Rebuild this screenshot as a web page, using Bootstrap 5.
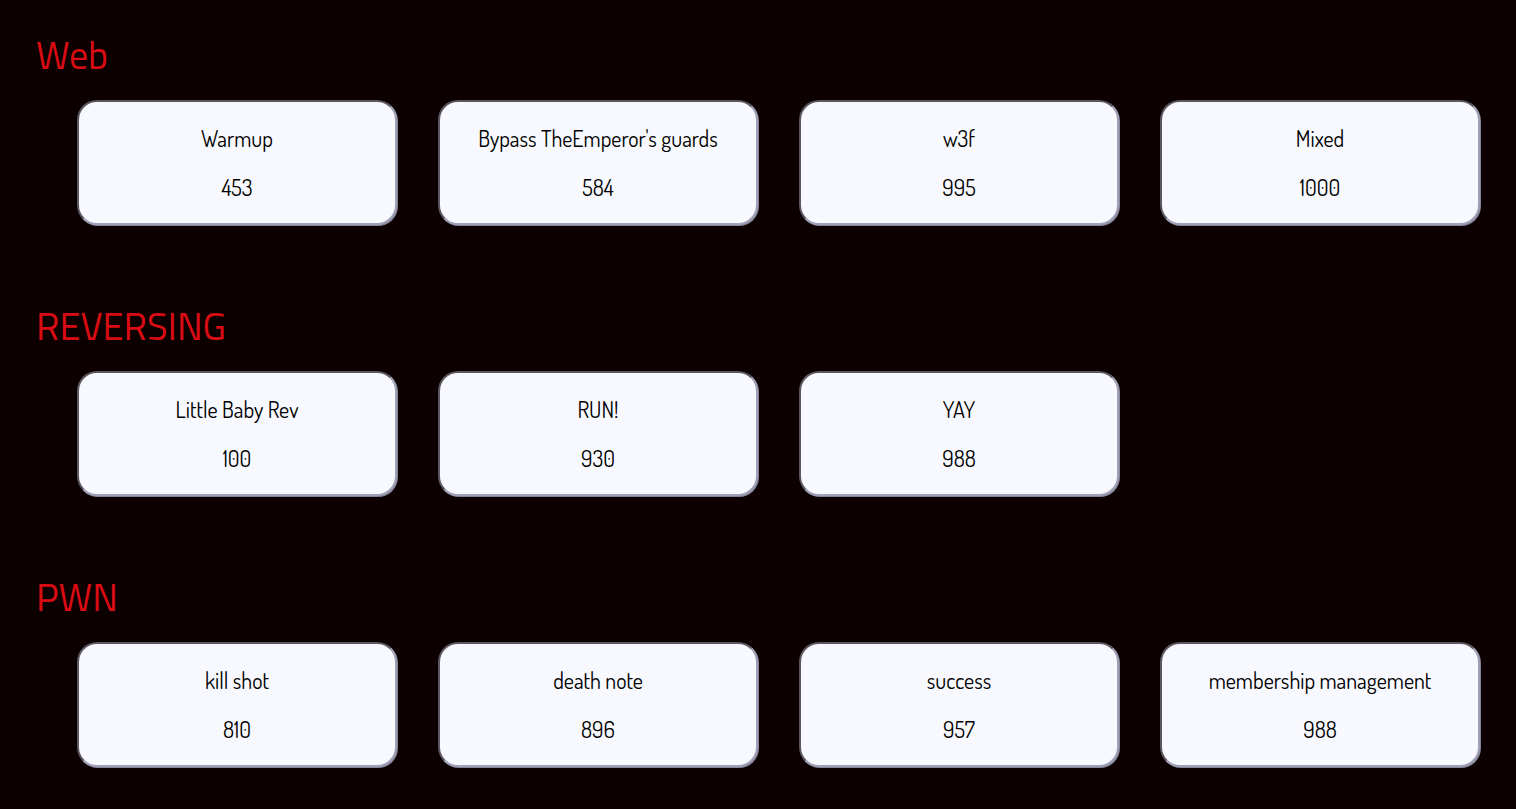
<!DOCTYPE html>
<html lang="en">
<head>
<meta charset="utf-8">
<meta name="viewport" content="width=device-width, initial-scale=1">
<title>Challenges</title>
<link href="https://cdn.jsdelivr.net/npm/bootstrap@5.3.0/dist/css/bootstrap.min.css" rel="stylesheet">
<style>
  body { background: #0d0000; }
  .board { padding: 31px 36px; }
  .category { margin-bottom: 77px; }
  .category-title {
    color: #d80c12;
    font: 400 38px/48px "Titillium Web", Roboto, sans-serif;
    margin-bottom: 21px;
  }
  .cell { padding-left: 41px; }
  .challenge {
    background: #f8f9ff;
    color: #000;
    border: 2px solid;
    border-color: #5b5862 #a0a0b6 #a0a0b6 #5b5862;
    border-radius: 20px;
    box-shadow: 1px 1px 0 #85859a;
    padding: 22px 16px;
    gap: 21px;
    font: 400 22px/28px Dosis, Lato, sans-serif;
  }
  .challenge:hover { background: #e6e8f5; }
</style>
</head>
<body>
<main class="board container-fluid">
  <section class="category">
    <h2 class="category-title">Web</h2>
    <div class="row g-0">
      <div class="cell col-12 col-sm-6 col-lg-3"><button type="button" class="challenge w-100 d-flex flex-column align-items-center"><span>Warmup</span><span>453</span></button></div>
      <div class="cell col-12 col-sm-6 col-lg-3"><button type="button" class="challenge w-100 d-flex flex-column align-items-center"><span>Bypass TheEmperor's guards</span><span>584</span></button></div>
      <div class="cell col-12 col-sm-6 col-lg-3"><button type="button" class="challenge w-100 d-flex flex-column align-items-center"><span>w3f</span><span>995</span></button></div>
      <div class="cell col-12 col-sm-6 col-lg-3"><button type="button" class="challenge w-100 d-flex flex-column align-items-center"><span>Mixed</span><span>1000</span></button></div>
    </div>
  </section>
  <section class="category">
    <h2 class="category-title">REVERSING</h2>
    <div class="row g-0">
      <div class="cell col-12 col-sm-6 col-lg-3"><button type="button" class="challenge w-100 d-flex flex-column align-items-center"><span>Little Baby Rev</span><span>100</span></button></div>
      <div class="cell col-12 col-sm-6 col-lg-3"><button type="button" class="challenge w-100 d-flex flex-column align-items-center"><span>RUN!</span><span>930</span></button></div>
      <div class="cell col-12 col-sm-6 col-lg-3"><button type="button" class="challenge w-100 d-flex flex-column align-items-center"><span>YAY</span><span>988</span></button></div>
    </div>
  </section>
  <section>
    <h2 class="category-title">PWN</h2>
    <div class="row g-0">
      <div class="cell col-12 col-sm-6 col-lg-3"><button type="button" class="challenge w-100 d-flex flex-column align-items-center"><span>kill shot</span><span>810</span></button></div>
      <div class="cell col-12 col-sm-6 col-lg-3"><button type="button" class="challenge w-100 d-flex flex-column align-items-center"><span>death note</span><span>896</span></button></div>
      <div class="cell col-12 col-sm-6 col-lg-3"><button type="button" class="challenge w-100 d-flex flex-column align-items-center"><span>success</span><span>957</span></button></div>
      <div class="cell col-12 col-sm-6 col-lg-3"><button type="button" class="challenge w-100 d-flex flex-column align-items-center"><span>membership management</span><span>988</span></button></div>
    </div>
  </section>
</main>
<script src="https://cdn.jsdelivr.net/npm/bootstrap@5.3.0/dist/js/bootstrap.bundle.min.js"></script>
</body>
</html>
